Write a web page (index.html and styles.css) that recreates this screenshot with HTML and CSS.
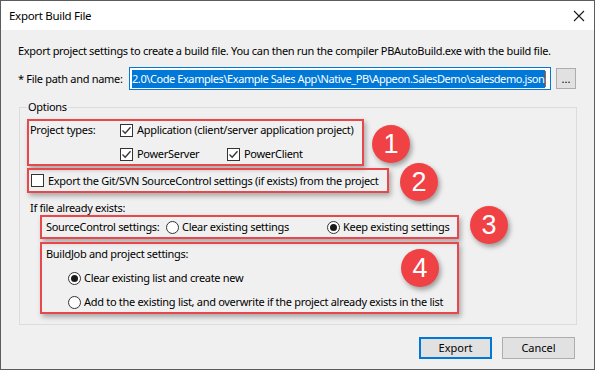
FILE: index.html
```html
<!DOCTYPE html>
<html lang="en">
<head>
    <meta charset="UTF-8">
    <title>Export Build File</title>
    <link rel="stylesheet" href="styles.css">
</head>
<body>
    <div class="window">
        <div class="titlebar">
            <span class="title">Export Build File</span>
            <svg class="close" width="12" height="12" viewBox="0 0 12 12">
                <path d="M1 1 L11 11 M11 1 L1 11" stroke="#1a1a1a" stroke-width="1.1" fill="none"/>
            </svg>
        </div>

        <div class="content">
            <p class="intro">Export project settings to create a build file. You can then run the compiler PBAutoBuild.exe with the build file.</p>

            <div class="file-row">
                <label class="file-label">* File path and name:</label>
                <div class="file-input">
                    <span class="selected">2.0\Code Examples\Example Sales App\Native_PB\Appeon.SalesDemo\salesdemo.json</span>
                    <span class="caret"></span>
                </div>
                <button class="browse">...</button>
            </div>

            <fieldset class="options">
                <legend>Options</legend>

                <!-- 1: project types -->
                <div class="mark mark-types">
                    <div class="types-grid">
                        <span class="types-label">Project types:</span>
                        <label class="check wide"><span class="box checked"></span>Application (client/server application project)</label>
                        <label class="check"><span class="box checked"></span>PowerServer</label>
                        <label class="check"><span class="box checked"></span>PowerClient</label>
                    </div>
                    <span class="badge badge-1">1</span>
                </div>

                <!-- 2: source control export -->
                <div class="mark mark-git">
                    <label class="check"><span class="box"></span>Export the Git/SVN SourceControl settings (if exists) from the project</label>
                    <span class="badge badge-2">2</span>
                </div>

                <div class="exists-label">If file already exists:</div>

                <!-- 3: source control settings -->
                <div class="mark mark-sc">
                    <span class="sc-label">SourceControl settings:</span>
                    <label class="radio sc-clear"><span class="dot"></span>Clear existing settings</label>
                    <label class="radio"><span class="dot on"></span>Keep existing settings</label>
                    <span class="badge badge-3">3</span>
                </div>

                <!-- 4: buildjob settings -->
                <div class="mark mark-bj">
                    <div class="bj-label">BuildJob and project settings:</div>
                    <label class="radio bj-opt"><span class="dot on"></span>Clear existing list and create new</label>
                    <label class="radio bj-opt"><span class="dot"></span>Add to the existing list, and overwrite if the project already exists in the list</label>
                    <span class="badge badge-4">4</span>
                </div>
            </fieldset>

            <div class="buttons">
                <button class="btn default">Export</button>
                <button class="btn">Cancel</button>
            </div>
        </div>
    </div>
</body>
</html>
```

FILE: styles.css
```css
* {
    box-sizing: border-box;
}

body {
    margin: 0;
    font-family: "Noto Sans", "Liberation Sans", sans-serif;
    font-size: 11px;
    line-height: 16px;
    letter-spacing: -0.3px;
    color: #000;
}

.window {
    width: 595px;
    height: 370px;
    border: 1px solid #5c5c5c;
    background: #f0f0f0;
    overflow: hidden;
}

.titlebar {
    height: 29px;
    background: #fff;
    display: flex;
    align-items: center;
    justify-content: space-between;
    padding: 0 9px 0 8px;
}

.title {
    font-size: 11.5px;
    color: #000;
}

.content {
    padding: 0 18px 0 17px;
}

.intro {
    margin: 13px 0 0;
    white-space: nowrap;
}

.file-row {
    display: flex;
    align-items: center;
    margin-top: 8px;
}

.file-label {
    width: 111px;
    white-space: nowrap;
}

.file-input {
    width: 422px;
    height: 23px;
    border: 1px solid #0078d7;
    background: #fff;
    display: flex;
    align-items: center;
    overflow: hidden;
    padding: 0 0 0 2px;
    white-space: nowrap;
}

.selected {
    background: #0078d7;
    color: #fff;
    line-height: 18px;
    letter-spacing: -0.42px;
    padding-right: 1px;
    flex: none;
}

.caret {
    width: 1px;
    height: 16px;
    background: #c06020;
    flex-shrink: 0;
}

.browse {
    margin-left: 5px;
    width: 20px;
    height: 21px;
    padding: 0;
    border: 1px solid #adadad;
    background: #e1e1e1;
    font: inherit;
    line-height: 14px;
}

.options {
    margin: 9px 0 0 1px;
    padding: 4px 7px 10px;
    border: 1px solid #dcdcdc;
    width: 558px;
}

.options legend {
    padding: 0 1px;
    margin-left: 0;
}

.mark {
    position: relative;
    border: 2px solid #e8474b;
    box-shadow: 2px 3px 5px rgba(0, 0, 0, 0.3);
}

.badge {
    position: absolute;
    width: 38px;
    height: 38px;
    border-radius: 50%;
    background: #f04145;
    color: #fff;
    font-family: "Liberation Sans", Arial, sans-serif;
    font-size: 27px;
    line-height: 38px;
    letter-spacing: 0;
    text-align: center;
    box-shadow: 2px 3px 5px rgba(0, 0, 0, 0.35);
    z-index: 2;
}

.mark-types {
    width: 337px;
    height: 47px;
    padding: 1px 0 0 1px;
}

.types-grid {
    display: grid;
    grid-template-columns: 90px 107px auto;
    row-gap: 8px;
    align-items: center;
}

.types-label {
    grid-row: span 2;
    align-self: start;
}

.wide {
    grid-column: 2 / 4;
}

.badge-1 {
    left: 343px;
    top: 4px;
}

.check,
.radio {
    display: flex;
    align-items: center;
    white-space: nowrap;
}

.box {
    width: 13px;
    height: 13px;
    border: 1px solid #333;
    background: #fff;
    margin-right: 4px;
    flex-shrink: 0;
}

.box.checked {
    background: #fff url("data:image/svg+xml;utf8,<svg xmlns='http://www.w3.org/2000/svg' width='11' height='11'><path d='M1.5 5.5 L4.2 8.2 L9.5 2.2' stroke='%23333' stroke-width='1.3' fill='none'/></svg>") center no-repeat;
}

.dot {
    width: 13px;
    height: 13px;
    border: 1px solid #333;
    border-radius: 50%;
    background: #fff;
    margin-right: 3px;
    flex-shrink: 0;
    display: flex;
    align-items: center;
    justify-content: center;
}

.dot.on::after {
    content: "";
    width: 7px;
    height: 7px;
    border-radius: 50%;
    background: #1a1a1a;
}

.mark-git {
    width: 362px;
    height: 25px;
    margin-top: 2px;
    padding: 0 0 0 2px;
    display: flex;
    align-items: center;
}

.badge-2 {
    left: 371px;
    top: -7px;
}

.exists-label {
    margin: 7px 0 0 3px;
}

.mark-sc {
    margin: -1px 0 0 13px;
    width: 419px;
    height: 24px;
    display: flex;
    align-items: center;
    padding-left: 4px;
}

.sc-label {
    width: 120px;
    white-space: nowrap;
}

.sc-clear {
    width: 161px;
}

.badge-3 {
    left: 428px;
    top: -11px;
}

.mark-bj {
    margin: 3px 0 0 13px;
    width: 419px;
    height: 72px;
    padding: 2px 0 0 4px;
}

.bj-opt {
    margin: 8px 0 0 22px;
}

.badge-4 {
    left: 359px;
    top: 5px;
}

.buttons {
    display: flex;
    justify-content: flex-end;
    gap: 10px;
    margin: 12px 1px 0 0;
}

.btn {
    width: 73px;
    height: 22px;
    border: 1px solid #adadad;
    background: #e1e1e1;
    font: inherit;
    padding: 0;
    color: #000;
}

.btn.default {
    border: 2px solid #0078d7;
}
```
